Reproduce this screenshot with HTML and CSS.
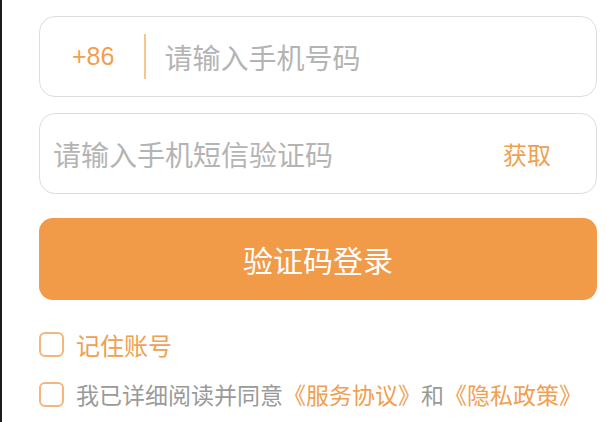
FILE: index.html
```html
<!DOCTYPE html>
<html lang="zh-CN">
<head>
<meta charset="utf-8">
<title>验证码登录</title>
<link rel="stylesheet" href="styles.css">
</head>
<body>
<div class="page">
  <form class="login">
    <div class="field field-phone">
      <span class="prefix">+86</span>
      <span class="divider"></span>
      <input class="input" type="text" placeholder="请输入手机号码">
    </div>
    <div class="field field-code">
      <input class="input" type="text" placeholder="请输入手机短信验证码">
      <button class="get-code" type="button">获取</button>
    </div>
    <button class="submit" type="button">验证码登录</button>
    <label class="check check-remember">
      <span class="box"></span>
      <span class="remember">记住账号</span>
    </label>
    <label class="check check-agree">
      <span class="box"></span>
      <span class="agree-text">我已详细阅读并同意<a class="link">《服务协议》</a>和<a class="link">《隐私政策》</a></span>
    </label>
  </form>
</div>
</body>
</html>
```

FILE: styles.css
```css
html, body {
  margin: 0;
  height: 100%;
  background: #ffffff;
}

.page {
  min-height: 100%;
  box-sizing: border-box;
  border-left: 2px solid #1c1c1c;
  padding: 16px 10px 0 37px;
  font-family: "Noto Sans CJK SC", "Noto Sans", sans-serif;
}

.login {
  display: flex;
  flex-direction: column;
}

.field {
  height: 81px;
  box-sizing: border-box;
  border: 1px solid #dddddd;
  border-radius: 16px;
  display: flex;
  align-items: center;
}

.field + .field {
  margin-top: 16px;
}

.field-phone {
  padding-left: 32px;
}

.prefix {
  font-family: "Liberation Sans", Arial, sans-serif;
  font-size: 25px;
  color: #f0a050;
}

.divider {
  width: 2px;
  height: 45px;
  background: #f5c592;
  margin: 0 18px 0 30px;
}

.input {
  flex: 1;
  min-width: 0;
  border: 0;
  outline: none;
  padding: 0;
  background: transparent;
  font-family: "Noto Sans CJK SC", sans-serif;
  font-size: 28px;
  color: #333333;
}

.input::placeholder {
  color: #b4b4b4;
}

.field-code {
  padding: 0 45px 0 13px;
}

.get-code {
  border: 0;
  background: transparent;
  padding: 0;
  font-family: "Noto Sans CJK SC", sans-serif;
  font-size: 24px;
  color: #f0a050;
}

.submit {
  margin-top: 24px;
  height: 82px;
  border: 0;
  border-radius: 14px;
  background: #f19a48;
  color: #ffffff;
  font-family: "Noto Sans CJK SC", sans-serif;
  font-size: 30px;
}

.check {
  display: flex;
  align-items: center;
  gap: 12px;
  height: 32px;
}

.check-remember {
  margin-top: 28px;
}

.check-agree {
  margin-top: 18px;
}

.box {
  width: 25px;
  height: 25px;
  box-sizing: border-box;
  border: 2px solid #f2b67e;
  border-radius: 6px;
  flex: none;
}

.remember {
  font-size: 24px;
  color: #f0a050;
}

.agree-text {
  font-size: 23px;
  color: #9a9a9a;
  white-space: nowrap;
}

.link {
  color: #f0a050;
}
```
